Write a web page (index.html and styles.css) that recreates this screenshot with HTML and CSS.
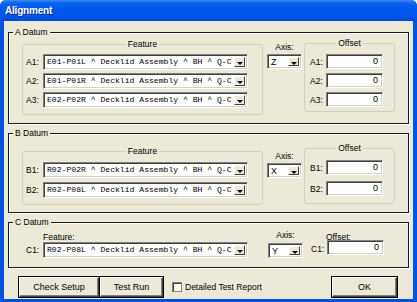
FILE: index.html
```html
<!DOCTYPE html>
<html lang="en">
<head>
    <meta charset="UTF-8">
    <meta name="viewport" content="width=device-width, initial-scale=1.0">
    <title>Alignment</title>
    <link rel="stylesheet" href="styles.css">
</head>
<body>
    <div class="window">
        <div class="titlebar"><span class="title">Alignment</span></div>

        <div class="dialog">
            <!-- A datum -->
            <div class="group group-a">
                <span class="group-label">A Datum</span>
                <div class="panel feature">
                    <span class="panel-label">Feature</span>
                    <div class="row"><span class="tag">A1:</span><div class="combo wide"><span class="combo-text">E01-P01L ^ Decklid Assembly ^ BH ^ Q-C</span><span class="drop"></span></div></div>
                    <div class="row"><span class="tag">A2:</span><div class="combo wide"><span class="combo-text">E01-P01R ^ Decklid Assembly ^ BH ^ Q-C</span><span class="drop"></span></div></div>
                    <div class="row"><span class="tag">A3:</span><div class="combo wide"><span class="combo-text">E02-P02R ^ Decklid Assembly ^ BH ^ Q-C</span><span class="drop"></span></div></div>
                </div>
                <div class="axis">
                    <span class="col-head">Axis:</span>
                    <div class="combo small"><span class="combo-text sans">Z</span><span class="drop"></span></div>
                </div>
                <div class="panel offset">
                    <span class="panel-label">Offset</span>
                    <div class="row"><span class="tag">A1:</span><div class="textbox">0</div></div>
                    <div class="row"><span class="tag">A2:</span><div class="textbox">0</div></div>
                    <div class="row"><span class="tag">A3:</span><div class="textbox">0</div></div>
                </div>
            </div>

            <!-- B datum -->
            <div class="group group-b">
                <span class="group-label">B Datum</span>
                <div class="panel feature">
                    <span class="panel-label">Feature</span>
                    <div class="row"><span class="tag">B1:</span><div class="combo wide"><span class="combo-text">R02-P02R ^ Decklid Assembly ^ BH ^ Q-C</span><span class="drop"></span></div></div>
                    <div class="row"><span class="tag">B2:</span><div class="combo wide"><span class="combo-text">R02-P08L ^ Decklid Assembly ^ BH ^ Q-C</span><span class="drop"></span></div></div>
                </div>
                <div class="axis">
                    <span class="col-head">Axis:</span>
                    <div class="combo small"><span class="combo-text sans">X</span><span class="drop"></span></div>
                </div>
                <div class="panel offset">
                    <span class="panel-label">Offset</span>
                    <div class="row"><span class="tag">B1:</span><div class="textbox">0</div></div>
                    <div class="row"><span class="tag">B2:</span><div class="textbox">0</div></div>
                </div>
            </div>

            <!-- C datum -->
            <div class="group group-c">
                <span class="group-label">C Datum</span>
                <div class="plain feature-c">
                    <span class="col-head indent">Feature:</span>
                    <div class="row"><span class="tag">C1:</span><div class="combo wide"><span class="combo-text">R02-P08L ^ Decklid Assembly ^ BH ^ Q-C</span><span class="drop"></span></div></div>
                </div>
                <div class="axis">
                    <span class="col-head">Axis:</span>
                    <div class="combo small"><span class="combo-text sans">Y</span><span class="drop"></span></div>
                </div>
                <div class="plain offset-c">
                    <span class="col-head indent">Offset:</span>
                    <div class="row"><span class="tag">C1:</span><div class="textbox">0</div></div>
                </div>
            </div>

            <div class="buttons">
                <button class="btn btn-setup">Check Setup</button>
                <button class="btn btn-run">Test Run</button>
                <label class="check"><span class="checkbox"></span>Detailed Test Report</label>
                <button class="btn btn-ok">OK</button>
            </div>
        </div>
    </div>
</body>
</html>
```

FILE: styles.css
```css
:root {
    --face: #ece9d8;
    --frame: #0054e3;
    --panel-line: #d0d0bf;
}

* {
    box-sizing: border-box;
    margin: 0;
    padding: 0;
}

body {
    font-family: 'Liberation Sans', Arial, sans-serif;
    font-size: 8.5px;
    color: #000;
    background: #fff;
}

.window {
    width: 417px;
    height: 302px;
    display: flex;
    flex-direction: column;
    background: var(--frame);
    border-radius: 6px 6px 0 0;
    overflow: hidden;
}

.titlebar {
    height: 21px;
    flex: none;
    display: flex;
    align-items: center;
    padding-left: 5px;
    background: linear-gradient(#3b8cf6 0, #0a63f0 3px, #0058ee 40%, #0055e6 80%, #0048d4 100%);
}

.title {
    color: #fff;
    font-weight: bold;
    font-size: 10px;
    letter-spacing: -0.2px;
    text-shadow: 1px 1px 0 #0a2a8a;
}

.dialog {
    flex: 1;
    margin: 0 4px 3px 4px;
    background: var(--face);
    display: flex;
    flex-direction: column;
}

/* dark outer group boxes */
.group {
    position: relative;
    margin: 9px 4px 0 4px;
    border: 1px solid #1a1a1a;
    box-shadow: inset 1px 1px 0 #fff, 1px 1px 0 #fff;
    display: flex;
    align-items: flex-start;
}

.group-a {
    margin-top: 11px;
    height: 92px;
    padding: 11px 0 0 13px;
}

.group-b {
    height: 80px;
    padding: 17px 0 0 13px;
}

.group-c {
    height: 46px;
    padding: 9px 0 0 17px;
}

.group-label {
    position: absolute;
    top: -6px;
    left: 4px;
    padding: 0 2px;
    line-height: 10px;
    background: var(--face);
}

/* light inner group boxes */
.panel {
    position: relative;
    border: 1px solid var(--panel-line);
    border-radius: 3px;
    display: flex;
    flex-direction: column;
}

.panel-label {
    position: absolute;
    top: -6px;
    left: 0;
    right: 0;
    margin: 0 auto;
    width: max-content;
    padding: 0 2px;
    line-height: 10px;
    background: var(--face);
}

.feature {
    width: 241px;
    padding: 9px 0 6px 3px;
    gap: 3px;
}

.group-b .feature {
    padding-top: 10px;
    gap: 4px;
    height: 54px;
}

.offset {
    width: 91px;
    margin: -1px 0 0 2px;
    padding: 10px 0 0 5px;
    height: 69px;
    gap: 4px;
}

.group-b .offset {
    margin-top: -3px;
    height: 56px;
    padding-top: 11px;
    gap: 6px;
}

.row {
    display: flex;
    align-items: center;
}

.tag {
    width: 17px;
    flex: none;
}

.offset .tag,
.offset-c .tag {
    width: 16px;
}

/* combo boxes */
.combo {
    height: 16px;
    display: flex;
    align-items: stretch;
    background: #fff;
    border: 1px solid;
    border-color: #808080 #fff #fff #808080;
    box-shadow: inset 1px 1px 0 #404040, inset -1px -1px 0 #d4d0c8;
    padding: 2px;
}

.combo.wide {
    width: 205px;
}

.combo.small {
    width: 35px;
    height: 15px;
}

.combo-text {
    flex: 1;
    min-width: 0;
    overflow: hidden;
    white-space: nowrap;
    font-family: 'Liberation Mono', 'Courier New', monospace;
    font-size: 8.1px;
    line-height: 10px;
    padding-left: 1px;
    color: #000;
}

.combo-text.sans {
    font-family: 'Liberation Sans', Arial, sans-serif;
    font-size: 9px;
}

.drop {
    width: 11px;
    flex: none;
    position: relative;
    background: var(--face);
    border: 1px solid;
    border-color: #fff #404040 #404040 #fff;
}

.drop::after {
    content: "";
    position: absolute;
    left: 2px;
    top: 4px;
    border-left: 3px solid transparent;
    border-right: 3px solid transparent;
    border-top: 3px solid #000;
}

/* axis column */
.axis {
    width: 35px;
    margin-left: 4px;
    display: flex;
    flex-direction: column;
    align-items: center;
    margin-top: -2px;
}

.group-b .axis {
    margin-top: 0;
}

.col-head {
    line-height: 10px;
    height: 12px;
}

.group-c .axis {
    margin-left: 20px;
}

.group-c .col-head {
    height: 13px;
}

.indent {
    margin-left: 17px;
}

.offset-c {
    margin-left: 8px;
}

.offset-c .indent {
    margin-left: 15px;
}

.textbox {
    width: 57px;
    height: 15px;
    background: #fff;
    border: 1px solid;
    border-color: #808080 #fff #fff #808080;
    box-shadow: inset 1px 1px 0 #404040, inset -1px -1px 0 #d4d0c8;
    text-align: right;
    padding-right: 4px;
    line-height: 13px;
    font-size: 9px;
}

.offset-c .textbox {
    margin-top: -2px;
}

/* bottom buttons */
.buttons {
    display: flex;
    align-items: center;
    margin-top: 9px;
    padding-left: 15px;
}

.btn {
    height: 20px;
    font-family: inherit;
    font-size: 9px;
    background: var(--face);
    border: 1px solid;
    border-color: #fff #404040 #404040 #fff;
    box-shadow: inset -1px -1px 0 #808080, 0 0 0 1px #000;
    color: #000;
}

.btn-setup {
    width: 80px;
}

.btn-run {
    width: 63px;
    margin-left: 1px;
}

.btn-ok {
    width: 65px;
    margin-left: auto;
    margin-right: 16px;
}

.check {
    display: flex;
    align-items: center;
    margin-left: 9px;
}

.checkbox {
    width: 10px;
    height: 10px;
    margin-right: 3px;
    background: #fff;
    border: 1px solid #808080;
    box-shadow: inset 1px 1px 0 #404040;
}
```
